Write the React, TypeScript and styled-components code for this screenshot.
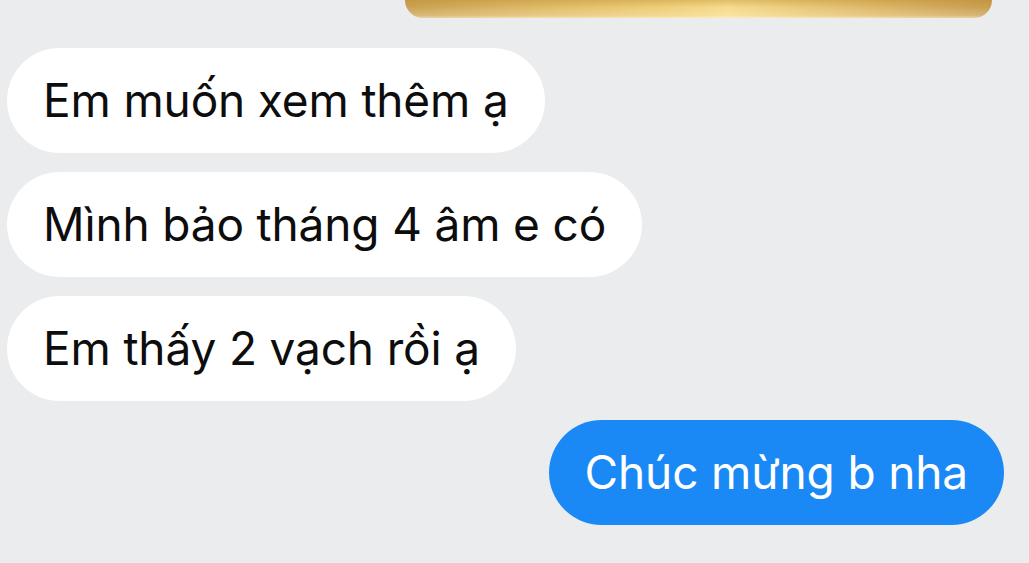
import React from "react";
import styled, { createGlobalStyle } from "styled-components";

const Global = createGlobalStyle`
  html, body {
    margin: 0;
    padding: 0;
    background: #ebecee;
    overflow: hidden;
  }
`;

const Page = styled.div`
  width: 1029px;
  height: 563px;
  background: #ebecee;
  display: flex;
  flex-direction: column;
  font-family: Inter, Roboto, "Noto Sans", "Liberation Sans", sans-serif;
`;

const ImageEdge = styled.div`
  margin-left: 405px;
  width: 587px;
  height: 18px;
  border-radius: 0 0 20px 20px;
  background:
    linear-gradient(
      180deg,
      rgba(190, 130, 40, 0.35) 0%,
      rgba(255, 255, 255, 0) 40%,
      rgba(255, 245, 220, 0.25) 85%,
      rgba(255, 250, 235, 0.55) 100%
    ),
    linear-gradient(
      90deg,
      #c9a252 0%,
      #dcb865 20%,
      #efd07b 45%,
      #f5dc8c 55%,
      #ddb868 80%,
      #c79e50 100%
    );
`;

const Thread = styled.div`
  display: flex;
  flex-direction: column;
  gap: 19px;
  padding: 30px 25px 0 7px;
`;

const Bubble = styled.div<{ $mine?: boolean }>`
  align-self: ${(p) => (p.$mine ? "flex-end" : "flex-start")};
  height: 105px;
  box-sizing: border-box;
  display: flex;
  align-items: center;
  padding: 0 36px 2px 36px;
  border-radius: 53px;
  background: ${(p) => (p.$mine ? "#1a89f6" : "#ffffff")};
  color: ${(p) => (p.$mine ? "#ffffff" : "#0d0d0d")};
  font-size: 46px;
  letter-spacing: -0.15px;
  white-space: nowrap;
`;

const messages = [
  { text: "Em muốn xem thêm ạ", mine: false },
  { text: "Mình bảo tháng 4 âm e có", mine: false },
  { text: "Em thấy 2 vạch rồi ạ", mine: false },
  { text: "Chúc mừng b nha", mine: true },
];

export default function App() {
  return (
    <>
      <Global />
      <Page>
        <ImageEdge />
        <Thread>
          {messages.map((m, i) => (
            <Bubble key={i} $mine={m.mine}>
              {m.text}
            </Bubble>
          ))}
        </Thread>
      </Page>
    </>
  );
}
